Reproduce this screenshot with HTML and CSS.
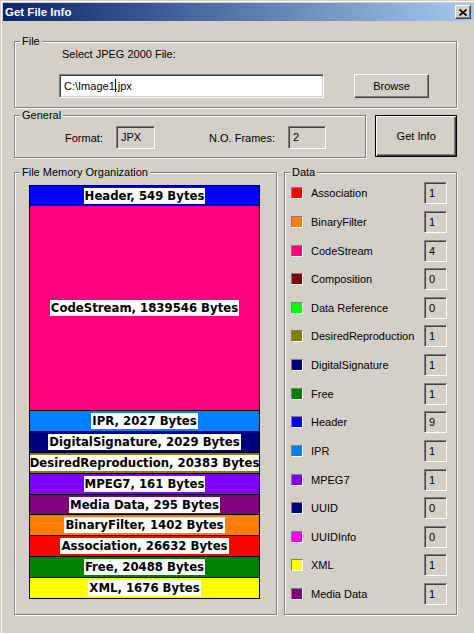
FILE: index.html
```
<!DOCTYPE html>
<html>
<head>
    <title>Get File Info</title>
    <link rel="stylesheet" href="styles.css">
</head>
<body>
    <div class="window">
        <div class="titlebar">
            <span class="title">Get File Info</span>
            <button class="close-button">
                <svg width="8" height="7" viewBox="0 0 8 7"><path d="M0.5 0.5 L7.5 6.5 M7.5 0.5 L0.5 6.5" stroke="#000" stroke-width="1.6" fill="none"/></svg>
            </button>
        </div>
        <div class="content">
            <fieldset class="group file-group">
                <legend>File</legend>
                <div class="file-body">
                    <div class="file-label">Select JPEG 2000 File:</div>
                    <div class="file-row">
                        <div class="textbox">C:\Image1<span class="caret"></span>.jpx</div>
                        <button class="btn browse-button">Browse</button>
                    </div>
                </div>
            </fieldset>

            <div class="general-row">
                <fieldset class="group general-group">
                    <legend>General</legend>
                    <div class="general-body">
                        <span class="format-label">Format:</span>
                        <div class="readonly format-box">JPX</div>
                        <span class="frames-label">N.O. Frames:</span>
                        <div class="readonly frames-box">2</div>
                    </div>
                </fieldset>
                <button class="btn default-button">Get Info</button>
            </div>

            <div class="bottom-row">
                <fieldset class="group memory-group">
                    <legend>File Memory Organization</legend>
                    <div class="memory-body">
                        <div class="chart">
                            <div class="bar first c-header"><span>Header, 549 Bytes</span></div>
                            <div class="bar big c-codestream"><span>CodeStream, 1839546 Bytes</span></div>
                            <div class="bar c-ipr"><span>IPR, 2027 Bytes</span></div>
                            <div class="bar c-digsig"><span>DigitalSignature, 2029 Bytes</span></div>
                            <div class="bar c-desired"><span>DesiredReproduction, 20383 Bytes</span></div>
                            <div class="bar c-mpeg7"><span>MPEG7, 161 Bytes</span></div>
                            <div class="bar c-media"><span>Media Data, 295 Bytes</span></div>
                            <div class="bar c-binary"><span>BinaryFilter, 1402 Bytes</span></div>
                            <div class="bar c-assoc"><span>Association, 26632 Bytes</span></div>
                            <div class="bar c-free"><span>Free, 20488 Bytes</span></div>
                            <div class="bar c-xml"><span>XML, 1676 Bytes</span></div>
                        </div>
                    </div>
                </fieldset>

                <fieldset class="group data-group">
                    <legend>Data</legend>
                    <ul class="data-list">
                        <li class="data-row"><span class="swatch c-assoc"></span><span class="data-name">Association</span><span class="value">1</span></li>
                        <li class="data-row"><span class="swatch c-binary"></span><span class="data-name">BinaryFilter</span><span class="value">1</span></li>
                        <li class="data-row"><span class="swatch c-codestream"></span><span class="data-name">CodeStream</span><span class="value">4</span></li>
                        <li class="data-row"><span class="swatch c-composition"></span><span class="data-name">Composition</span><span class="value">0</span></li>
                        <li class="data-row"><span class="swatch c-dataref"></span><span class="data-name">Data Reference</span><span class="value">0</span></li>
                        <li class="data-row"><span class="swatch c-desired"></span><span class="data-name">DesiredReproduction</span><span class="value">1</span></li>
                        <li class="data-row"><span class="swatch c-digsig"></span><span class="data-name">DigitalSignature</span><span class="value">1</span></li>
                        <li class="data-row"><span class="swatch c-free"></span><span class="data-name">Free</span><span class="value">1</span></li>
                        <li class="data-row"><span class="swatch c-header"></span><span class="data-name">Header</span><span class="value">9</span></li>
                        <li class="data-row"><span class="swatch c-ipr"></span><span class="data-name">IPR</span><span class="value">1</span></li>
                        <li class="data-row"><span class="swatch c-mpeg7"></span><span class="data-name">MPEG7</span><span class="value">1</span></li>
                        <li class="data-row"><span class="swatch c-uuid"></span><span class="data-name">UUID</span><span class="value">0</span></li>
                        <li class="data-row"><span class="swatch c-uuidinfo"></span><span class="data-name">UUIDInfo</span><span class="value">0</span></li>
                        <li class="data-row"><span class="swatch c-xml"></span><span class="data-name">XML</span><span class="value">1</span></li>
                        <li class="data-row"><span class="swatch c-media"></span><span class="data-name">Media Data</span><span class="value">1</span></li>
                    </ul>
                </fieldset>
            </div>
        </div>
    </div>
</body>
</html>
```
FILE: styles.css
```
body {
    margin: 0;
    background-color: #d4d0c8;
    font-family: "Liberation Sans", Arial, sans-serif;
    font-size: 11px;
    color: #000;
}
.window {
    width: 474px;
    height: 633px;
    box-sizing: border-box;
    padding: 3px 0 0 3px;
    background-color: #d4d0c8;
    box-shadow: inset 1px 1px 0 #d4d0c8, inset 2px 2px 0 #fff;
    overflow: hidden;
}
.titlebar {
    height: 18px;
    display: flex;
    align-items: center;
    justify-content: space-between;
    padding: 0 3px 0 2px;
    background: linear-gradient(to right, #0a246a, #a6caf0);
}
.title {
    color: #fff;
    font-weight: bold;
    font-size: 11.5px;
}
.close-button {
    width: 16px;
    height: 14px;
    padding: 0;
    display: flex;
    align-items: center;
    justify-content: center;
    background-color: #d4d0c8;
    border: 1px solid;
    border-color: #fff #404040 #404040 #fff;
    box-shadow: inset -1px -1px 0 #808080;
}
.content {
    padding: 14px 17px 0 11px;
}

/* group boxes */
.group {
    margin: 0;
    padding: 0;
    min-width: 0;
    border: 1px solid #808080;
    box-shadow: 1px 1px 0 #fff, inset 1px 1px 0 #fff;
}
.group legend {
    margin-left: 5px;
    padding: 0 2px;
    line-height: 13px;
    background-color: #d4d0c8;
}
.file-body {
    padding: 0 0 9px 44px;
}
.file-label {
    line-height: 13px;
    margin-left: 3px;
}
.file-row {
    display: flex;
    margin-top: 13px;
}

/* inputs and buttons */
.textbox, .readonly, .value {
    box-sizing: border-box;
    border: 1px solid;
    border-color: #808080 #fff #fff #808080;
    box-shadow: inset 1px 1px 0 #404040, inset -1px -1px 0 #d4d0c8;
    padding-left: 4px;
}
.textbox {
    width: 265px;
    height: 24px;
    line-height: 22px;
    background-color: #fff;
}
.caret {
    display: inline-block;
    width: 1px;
    height: 13px;
    margin-right: -1px;
    background-color: #000;
    vertical-align: -2px;
}
.btn {
    font-family: inherit;
    font-size: 11px;
    color: #000;
    background-color: #d4d0c8;
    padding: 0;
}
.browse-button {
    width: 75px;
    height: 24px;
    margin-left: 30px;
    border: 1px solid;
    border-color: #fff #404040 #404040 #fff;
    box-shadow: inset -1px -1px 0 #808080;
}
.default-button {
    width: 82px;
    height: 42px;
    margin: 6px 0 0 9px;
    border: 1px solid #000;
    box-shadow: inset 1px 1px 0 #fff, inset -1px -1px 0 #404040, inset -2px -2px 0 #808080;
}

.general-row {
    display: flex;
    align-items: flex-start;
    margin-top: 1px;
}
.general-group {
    width: 354px;
    box-sizing: border-box;
}
.general-body {
    display: flex;
    align-items: center;
    padding: 4px 0 8px 50px;
}
.format-label {
    width: 51px;
}
.frames-label {
    width: 79px;
    margin-left: 54px;
}
.readonly {
    height: 23px;
    line-height: 21px;
}
.format-box {
    width: 39px;
}
.frames-box {
    width: 38px;
}

.bottom-row {
    display: flex;
    margin-top: 8px;
}
.memory-group {
    width: 263px;
    height: 449px;
    box-sizing: border-box;
}
.data-group {
    width: 173px;
    height: 449px;
    box-sizing: border-box;
    margin-left: 7px;
}
.memory-body {
    padding: 6px 16px 0 14px;
}

/* memory chart */
.bar {
    display: flex;
    justify-content: center;
    align-items: center;
    box-sizing: border-box;
    height: 21.9px;
    margin-top: -1px;
    border: 1px solid #000;
    overflow: hidden;
}
.bar.first {
    height: 21px;
    margin-top: 0;
}
.bar.big {
    height: 206px;
}
.bar span {
    background-color: #fff;
    padding: 0 1px;
    line-height: 16px;
    font-family: "DejaVu Sans Condensed", "DejaVu Sans", sans-serif;
    font-stretch: condensed;
    font-weight: bold;
    font-size: 13px;
    white-space: nowrap;
}

/* data list */
.data-list {
    list-style: none;
    margin: 0;
    padding: 0 9px 0 6px;
}
.data-row {
    display: flex;
    align-items: center;
    height: 28.64px;
}
.swatch {
    width: 12px;
    height: 12px;
    box-sizing: border-box;
    border: 1px solid;
    border-color: #808080 #fff #fff #808080;
}
.data-name {
    margin-left: 8px;
}
.value {
    width: 23px;
    height: 22px;
    line-height: 20px;
    margin-left: auto;
    padding-left: 4px;
}

/* box colours */
.c-assoc { background-color: #ff0000; }
.c-binary { background-color: #ff8000; }
.c-codestream { background-color: #ff0080; }
.c-composition { background-color: #800000; }
.c-dataref { background-color: #00ff00; }
.c-desired { background-color: #808000; }
.c-digsig { background-color: #000080; }
.c-free { background-color: #008000; }
.c-header { background-color: #0000ff; }
.c-ipr { background-color: #0080ff; }
.c-mpeg7 { background-color: #8000ff; }
.c-uuid { background-color: #000080; }
.c-uuidinfo { background-color: #ff00ff; }
.c-xml { background-color: #ffff00; }
.c-media { background-color: #800080; }
```
